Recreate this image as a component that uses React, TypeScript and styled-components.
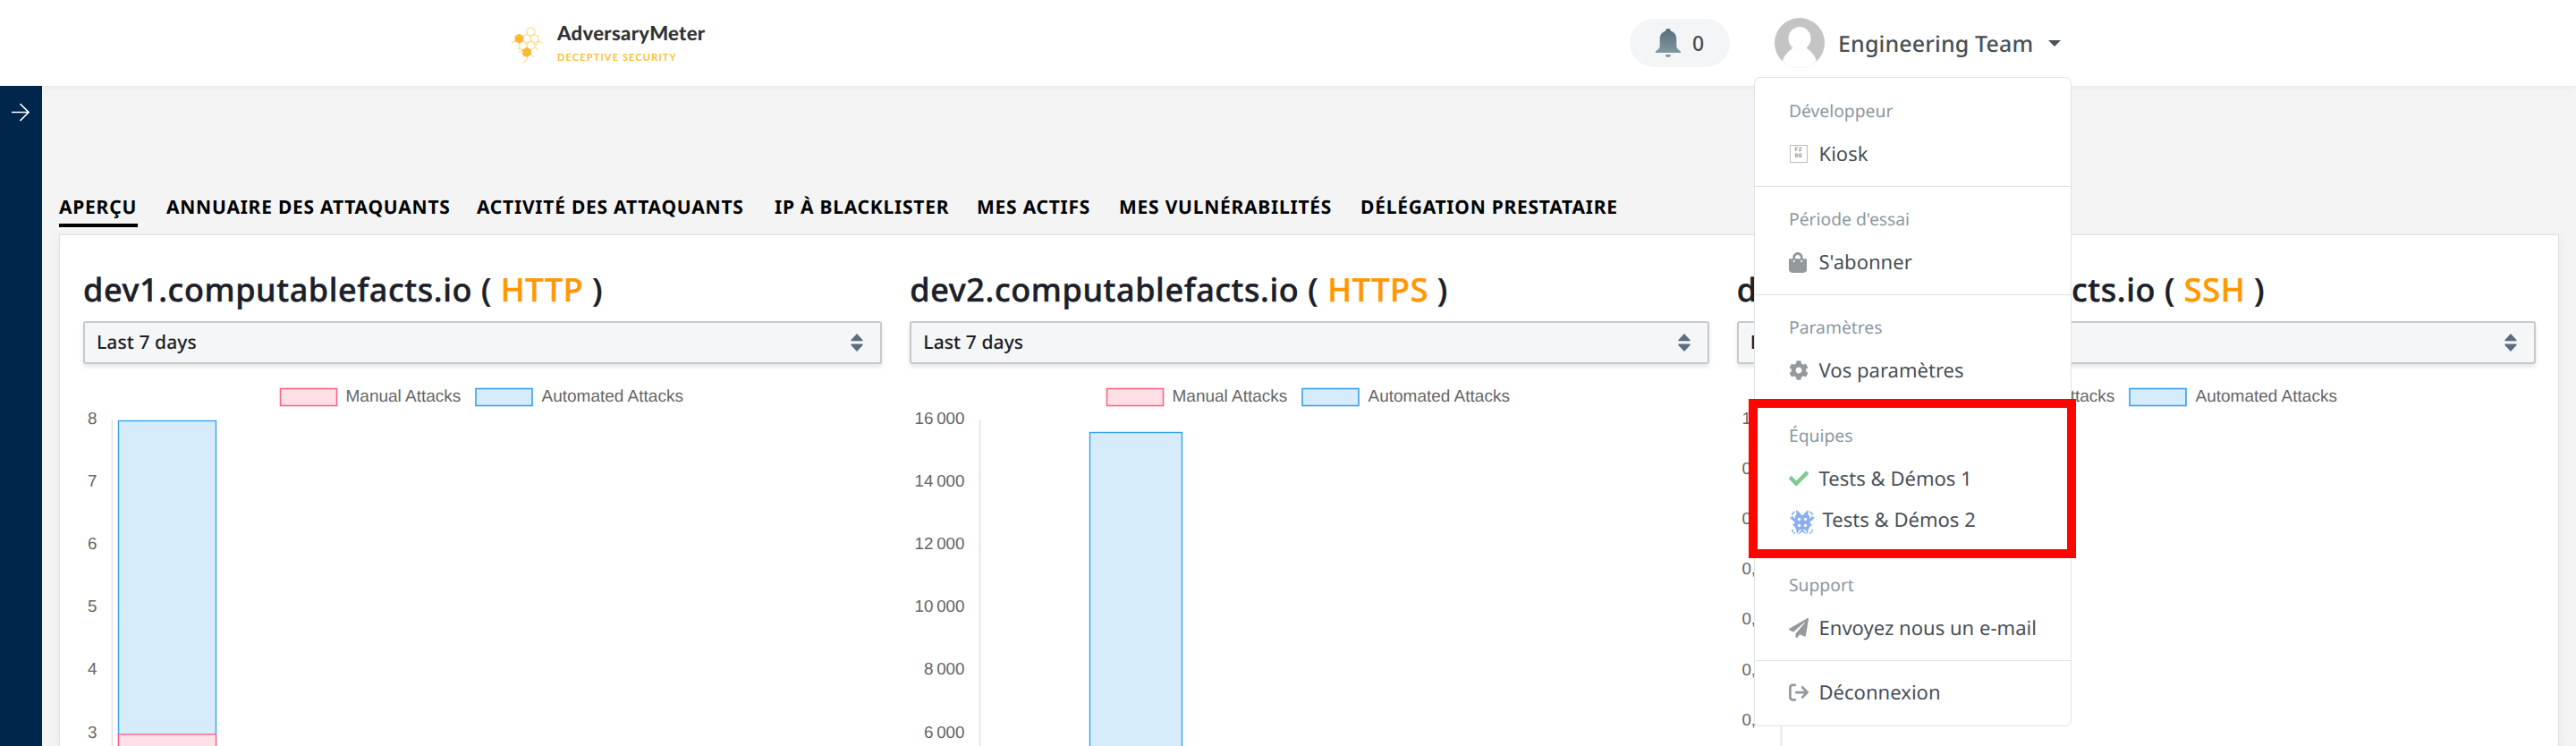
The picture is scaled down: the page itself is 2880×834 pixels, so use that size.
import React from "react";
import styled, { createGlobalStyle } from "styled-components";
import { FaShoppingBag, FaCog, FaCheck, FaPaperPlane } from "react-icons/fa";
import { FaArrowRightFromBracket } from "react-icons/fa6";

const Global = createGlobalStyle`
  * { box-sizing: border-box; }
  body {
    margin: 0;
    background: #f4f4f4;
    font-family: "Noto Sans", "Open Sans", sans-serif;
    text-rendering: geometricPrecision;
    overflow: hidden;
  }
`;

const Page = styled.div`
  display: flex;
  flex-direction: column;
  height: 834px;
  overflow: hidden;
`;

/* ---------- top bar ---------- */

const Header = styled.header`
  position: relative;
  z-index: 2;
  display: flex;
  align-items: center;
  flex: none;
  height: 96px;
  padding-left: 570px;
  background: #fff;
  box-shadow: 0 2px 8px rgba(0, 0, 0, 0.05);
`;

const Brand = styled.a`
  display: flex;
  align-items: flex-start;
  width: 1252px;
  height: 60px;
`;

const BrandMark = styled.svg`
  width: 40px;
  height: 46px;
  margin: 8px 13px 0 0;
`;

const BrandText = styled.div`
  font-family: Lato, sans-serif;
`;

const BrandName = styled.div`
  font-size: 22px;
  font-weight: 900;
  line-height: 28px;
  letter-spacing: 0.35px;
  margin-top: 5px;
  color: #333;
`;

const BrandTagline = styled.div`
  font-size: 11px;
  font-weight: 700;
  line-height: 14px;
  letter-spacing: 1.15px;
  margin-top: 7px;
  color: #f9bf3b;
`;

const Notifications = styled.button`
  display: flex;
  align-items: center;
  gap: 12px;
  width: 112px;
  height: 54px;
  padding: 0 0 0 28px;
  border: 0;
  border-radius: 27px;
  background: #f3f5f7;
  color: #495057;
  font: 500 23px/32px "Noto Sans", sans-serif;
`;

const Account = styled.div`
  position: relative;
  display: flex;
  align-items: center;
  height: 96px;
  margin-left: 50px;
`;

const AccountName = styled.span`
  margin: 1px 0 0 15px;
  font-size: 25px;
  font-weight: 500;
  line-height: 36px;
  letter-spacing: 0.15px;
  color: #495057;
`;

const Caret = styled.span`
  margin-left: 17px;
  border: 7.5px solid transparent;
  border-top-color: #495057;
  border-bottom: 0;
`;

/* ---------- account menu ---------- */

const Menu = styled.div`
  position: absolute;
  top: 86px;
  left: -23px;
  width: 355px;
  border: 1px solid #dee2e6;
  border-radius: 7px;
  background: #fff;
`;

const MenuSection = styled.section`
  position: relative;
  padding: 12px 0;
  & + &::before {
    content: "";
    display: block;
    height: 1px;
    margin: -12px 0 11px;
    background: #dee2e6;
  }
  &:last-child { padding: 14px 0 13px; }
  &:last-child::before { margin: -14px 0 13px; }
`;

const MenuHeading = styled.h6`
  margin: 0;
  padding: 0 0 1px 38px;
  font-size: 19.3px;
  font-weight: 400;
  line-height: 50px;
  color: #8998a3;
`;

const MenuItem = styled.a`
  display: flex;
  align-items: center;
  height: 46px;
  padding: 0 0 2px 37.5px;
  font-size: 22px;
  line-height: 44px;
  letter-spacing: 0.03px;
  color: #495057;
  white-space: nowrap;
`;

const ItemIcon = styled.span<{ $tone?: string; $wide?: boolean }>`
  display: flex;
  align-items: center;
  width: ${(p) => (p.$wide ? 30 : 22)}px;
  margin-right: ${(p) => (p.$wide ? 8 : 12)}px;
  margin-top: ${(p) => (p.$wide ? 6 : 0)}px;
  font-size: 22px;
  color: ${(p) => p.$tone ?? "#94999e"};
`;

const GlyphBox = styled.span`
  display: grid;
  place-content: center;
  width: 20px;
  height: 20px;
  margin: 1px;
  border: 1px solid #b9bcbf;
  font: 700 7px/7px "Liberation Mono", monospace;
  text-align: center;
  color: #94999e;
`;

const BagIcon = styled(FaShoppingBag)`
  height: 23px;
  width: 20px;
`;

const Highlight = styled.div`
  position: absolute;
  inset: -4px -6px -7px -7px;
  border: 10px solid #ff0500;
  z-index: 1;
`;

/* ---------- body ---------- */

const Body = styled.div`
  display: flex;
  flex: 1;
  min-height: 0;
`;

const Sidebar = styled.aside`
  position: relative;
  z-index: 3;
  flex: none;
  width: 47px;
  padding: 19px 0 0 12px;
  background: #00264b;
`;

const Main = styled.main`
  flex: 1;
  display: flex;
  flex-direction: column;
  padding: 121px 19px 0;
`;

const Tabs = styled.nav`
  display: flex;
  gap: 32px;
`;

const Tab = styled.a<{ $active?: boolean; $w: number }>`
  width: ${(p) => p.$w}px;
  padding-bottom: 3px;
  border-bottom: 4px solid ${(p) => (p.$active ? "#000" : "transparent")};
  font-size: 21px;
  font-weight: 700;
  line-height: 30px;
  letter-spacing: 0.76px;
  white-space: nowrap;
  color: #000;
`;

const Card = styled.section`
  display: grid;
  grid-template-columns: repeat(3, 1fr);
  column-gap: 31px;
  flex: 1;
  margin-top: 8px;
  padding: 36px 25px 0 26px;
  border: 1px solid #dcdfe6;
  border-bottom: 0;
  background: #fff;
  box-shadow: 0 4px 12px rgba(0, 0, 0, 0.06);
`;

const Title = styled.h3`
  margin: 0 0 10px;
  font-size: 36px;
  font-weight: 500;
  line-height: 50px;
  letter-spacing: 0.6px;
  -webkit-text-stroke: 0.5px currentColor;
  color: #1b2028;
  white-space: nowrap;
`;

const Protocol = styled.span`
  color: #ff9800;
`;

const Select = styled.div`
  display: flex;
  align-items: center;
  justify-content: space-between;
  height: 48px;
  padding: 0 19px 0 13px;
  border: 2px solid #c8c9ca;
  border-radius: 3px;
  background: #f5f6f8;
  box-shadow: 0 3px 5px rgba(0, 0, 0, 0.1);
  font-size: 21px;
  font-weight: 500;
  line-height: 44px;
  letter-spacing: 0.1px;
  color: #1b2028;
`;

const Plot = styled.svg`
  display: block;
  width: 893px;
  height: 427px;
  font-family: "Liberation Sans", Arial, sans-serif;
  font-size: 19px;
`;

type Bar = { x: number; w: number; top: number; tone: "manual" | "auto" };
type Chart = {
  host: string;
  protocol: string;
  ticks: string[];
  step: number;
  labelRight: number;
  axis: number;
  bars: Bar[];
};

const tones = {
  manual: { fill: "#ffe0e6", stroke: "#ff6384" },
  auto: { fill: "#d7ecfb", stroke: "#36a2eb" },
};

const charts: Chart[] = [
  {
    host: "dev1.computablefacts.io",
    protocol: "HTTP",
    ticks: ["8", "7", "6", "5", "4", "3"],
    step: 70.2,
    labelRight: 15.5,
    axis: 32.5,
    bars: [
      { x: 39, w: 110, top: 63, tone: "auto" },
      { x: 39, w: 110, top: 413.5, tone: "manual" },
    ],
  },
  {
    host: "dev2.computablefacts.io",
    protocol: "HTTPS",
    ticks: ["16\u202f000", "14\u202f000", "12\u202f000", "10\u202f000", "8\u202f000", "6\u202f000"],
    step: 70.2,
    labelRight: 61.5,
    axis: 78.5,
    bars: [{ x: 201, w: 104, top: 76, tone: "auto" }],
  },
  {
    host: "dev-03.computablefacts.io",
    protocol: "SSH",
    ticks: ["1,0", "0,9", "0,8", "0,7", "0,6", "0,5", "0,4"],
    step: 56.2,
    labelRight: 31.5,
    axis: 49.5,
    bars: [],
  },
];

const ChartColumn = ({ chart }: { chart: Chart }) => (
  <div>
    <Title>
      {chart.host} ( <Protocol>{chart.protocol}</Protocol> )
    </Title>
    <Select>
      Last 7 days
      <svg width="14" height="20" viewBox="0 0 14 20" fill="#5f6b7e">
        <path d="M7 0 13.5 7v1.2H.5V7zM7 20 13.5 13v-1.6H.5V13z" />
      </svg>
    </Select>
    <Plot viewBox="0 0 893 427">
      <rect x="220.5" y="27.5" width="63" height="19" fill={tones.manual.fill} stroke={tones.manual.stroke} strokeWidth="1.6" />
      <text x="293.5" y="42" fill="#666">Manual Attacks</text>
      <rect x="439" y="27.5" width="63" height="19" fill={tones.auto.fill} stroke={tones.auto.stroke} strokeWidth="1.6" />
      <text x="512.5" y="42" fill="#666">Automated Attacks</text>
      <line x1={chart.axis} x2={chart.axis} y1="62" y2="440" stroke="#e2e2e2" strokeWidth="1.6" />
      {chart.ticks.map((t, i) => (
        <text key={t} x={chart.labelRight} y={66.5 + i * chart.step} textAnchor="end" fill="#666" fontSize="18.8">
          {t}
        </text>
      ))}
      {chart.bars.map((b) => (
        <rect
          key={b.tone}
          x={b.x + 0.5}
          y={b.top + 0.5}
          width={b.w - 1}
          height={440}
          fill={tones[b.tone].fill}
          stroke={tones[b.tone].stroke}
          strokeWidth="1.4"
        />
      ))}
    </Plot>
  </div>
);

/* pointy-top hexagon outline around a centre */
const hex = (cx: number, cy: number, r = 5) =>
  `M${cx} ${cy - r}l${r * 0.87} ${r / 2}v${r}l${-r * 0.87} ${r / 2}l${-r * 0.87} ${-r / 2}v${-r}z`;

const Logo = () => (
  <BrandMark viewBox="0 0 40 46" fill="none" stroke="#fbdc92" strokeWidth="1.1">
    <path d={hex(23.4, 9.5)} />
    <path d={hex(19, 17.2)} />
    <path d={hex(27.8, 17.2)} />
    <path d={hex(14.6, 25)} />
    <path d={hex(23.4, 25)} />
    <path d="M6.2 19.6 2 22M32 19.6l4.4 2.6M32 19.6v2.6l-4 2.4M28 27.4l4 2.4M14.6 30l-4.4 2.4M10.2 27.5v2.6M19 35l-4.4 2.4M23.4 35l4.4 2.4M19 36v5l-4.4 3.4" />
    <path d={hex(10.4, 17.2, 4.9)} fill="#f9b934" stroke="#f9b934" />
    <path d={hex(19, 32.4, 4.9)} fill="#f9b934" stroke="#f9b934" />
  </BrandMark>
);

const Bell = () => (
  <svg width="30" height="34" viewBox="0 0 30 34">
    <defs>
      <linearGradient id="bell" x1="0" y1="0" x2="0" y2="1">
        <stop offset="0" stopColor="#596b7b" />
        <stop offset="1" stopColor="#82999f" />
      </linearGradient>
    </defs>
    <path
      fill="url(#bell)"
      d="M15 1c1.9 0 3 1.1 3 2.8 3.8 1.1 6.3 4.3 6.3 8.7v7.5c0 2.8 1.6 4.5 4.7 6.3v1.7H1v-1.7c3.1-1.8 4.7-3.5 4.7-6.3v-7.5c0-4.4 2.5-7.6 6.3-8.7C12 2.1 13.1 1 15 1z"
    />
    <path fill="#82999f" d="M12 30h6c0 2-1.2 3-3 3s-3-1-3-3z" />
  </svg>
);

const Avatar = () => (
  <svg width="56" height="56" viewBox="0 0 56 56">
    <defs>
      <clipPath id="round">
        <circle cx="28" cy="28" r="28" />
      </clipPath>
    </defs>
    <g clipPath="url(#round)">
      <rect width="56" height="56" fill="#c4c4c4" />
      <ellipse cx="28" cy="23" rx="12.5" ry="13" fill="#fff" />
      <path fill="#fff" d="M8 56C8 42 16 37.5 21 33h14c5 4.5 13 9 13 23z" />
    </g>
  </svg>
);

const Identicon = () => (
  <svg width="30" height="30" viewBox="0 0 30 30">
    <g fill="#8aaff0">
      <path d="M7 7h16v16H7z" />
      <path d="M8 8V1.5l3 1.5 4 5zM22 8V1.5L19 3l-4 5z" />
      <path d="M3 7c0-2.5 1.5-4 4-4.5L7 6zM27 7c0-2.5-1.5-4-4-4.5L23 6z" />
      <path d="M1 10l3-2 3 3v4zM29 10l-3-2-3 3v4zM1 16l3 2 3-3v5zM29 16l-3 2-3-3v5z" />
      <path d="M15 22l5.5 7-5.5-3.5L9.5 29z" />
      <path d="M3 23h4v5c-2.500-.5-4-2.500-4-5zM27 23h-4v5c2.500-.5 4-2.500 4-5zM8 23h4l-3 5zM22 23h-4l3 5z" />
    </g>
    <g fill="#fff">
      <circle cx="11.5" cy="11.5" r="1.7" />
      <circle cx="18.5" cy="11.5" r="1.7" />
      <circle cx="11.5" cy="18.5" r="1.7" />
      <circle cx="18.5" cy="18.5" r="1.7" />
      <ellipse cx="6.8" cy="5.8" rx="1.6" ry="2.4" transform="rotate(35 6.8 5.8)" />
      <ellipse cx="23.2" cy="5.8" rx="1.6" ry="2.4" transform="rotate(-35 23.2 5.8)" />
      <ellipse cx="6.5" cy="24" rx="1.6" ry="2.4" transform="rotate(35 6.5 24)" />
      <ellipse cx="23.5" cy="24" rx="1.6" ry="2.4" transform="rotate(-35 23.5 24)" />
    </g>
  </svg>
);

const tabs: [string, number][] = [
  ["APERÇU", 88],
  ["ANNUAIRE DES ATTAQUANTS", 315],
  ["ACTIVITÉ DES ATTAQUANTS", 301],
  ["IP À BLACKLISTER", 194],
  ["MES ACTIFS", 127],
  ["MES VULNÉRABILITÉS", 238],
  ["DÉLÉGATION PRESTATAIRE", 290],
];

export default function App() {
  return (
    <Page>
      <Global />
      <Header>
        <Brand>
          <Logo />
          <BrandText>
            <BrandName>AdversaryMeter</BrandName>
            <BrandTagline>DECEPTIVE SECURITY</BrandTagline>
          </BrandText>
        </Brand>
        <Notifications>
          <Bell />0
        </Notifications>
        <Account>
          <Avatar />
          <AccountName>Engineering Team</AccountName>
          <Caret />
          <Menu>
            <MenuSection>
              <MenuHeading>Développeur</MenuHeading>
              <MenuItem>
                <ItemIcon>
                  <GlyphBox>F2<br />86</GlyphBox>
                </ItemIcon>
                Kiosk
              </MenuItem>
            </MenuSection>
            <MenuSection>
              <MenuHeading>Période d'essai</MenuHeading>
              <MenuItem>
                <ItemIcon><BagIcon /></ItemIcon>
                S'abonner
              </MenuItem>
            </MenuSection>
            <MenuSection>
              <MenuHeading>Paramètres</MenuHeading>
              <MenuItem>
                <ItemIcon><FaCog /></ItemIcon>
                Vos paramètres
              </MenuItem>
            </MenuSection>
            <MenuSection>
              <Highlight />
              <MenuHeading>Équipes</MenuHeading>
              <MenuItem>
                <ItemIcon $tone="#7ecb90"><FaCheck /></ItemIcon>
                Tests &amp; Démos 1
              </MenuItem>
              <MenuItem>
                <ItemIcon $wide><Identicon /></ItemIcon>
                Tests &amp; Démos 2
              </MenuItem>
            </MenuSection>
            <MenuSection>
              <MenuHeading>Support</MenuHeading>
              <MenuItem>
                <ItemIcon><FaPaperPlane /></ItemIcon>
                Envoyez nous un e-mail
              </MenuItem>
            </MenuSection>
            <MenuSection>
              <MenuItem>
                <ItemIcon><FaArrowRightFromBracket /></ItemIcon>
                Déconnexion
              </MenuItem>
            </MenuSection>
          </Menu>
        </Account>
      </Header>
      <Body>
        <Sidebar>
          <svg width="22" height="22" viewBox="0 0 22 22" fill="none" stroke="#fff" strokeWidth="1.7">
            <path d="M1 10.5h19M10.5 1l9.5 9.5-9.5 9.5" />
          </svg>
        </Sidebar>
        <Main>
          <Tabs>
            {tabs.map(([label, w], i) => (
              <Tab key={label} $w={w} $active={i === 0}>{label}</Tab>
            ))}
          </Tabs>
          <Card>
            {charts.map((c) => (
              <ChartColumn key={c.host} chart={c} />
            ))}
          </Card>
        </Main>
      </Body>
    </Page>
  );
}
